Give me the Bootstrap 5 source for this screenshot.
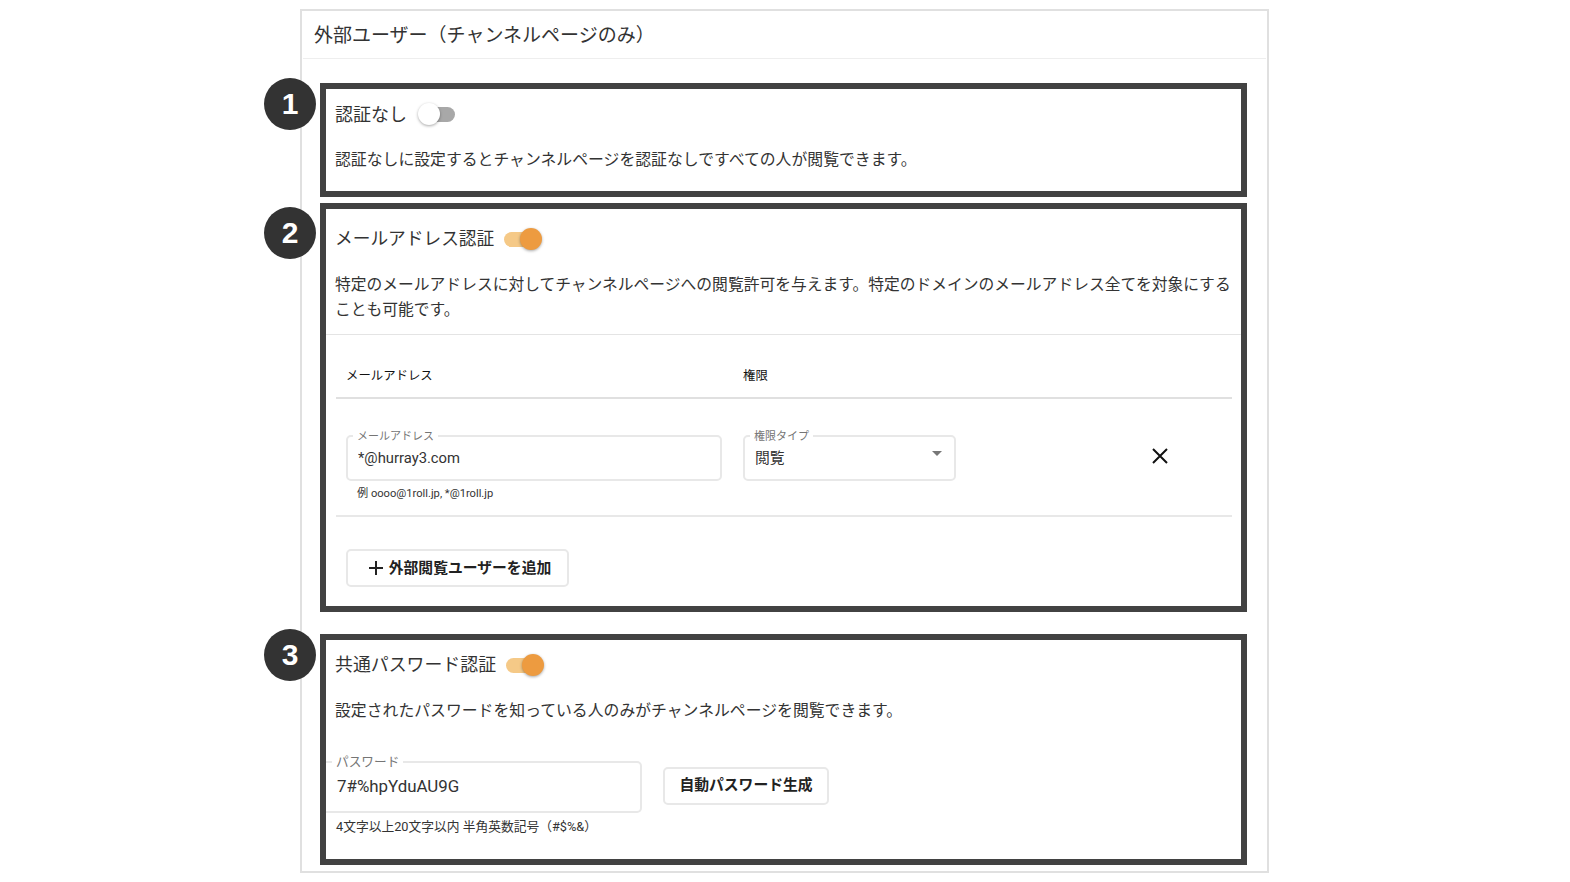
<!DOCTYPE html>
<html lang="ja">
<head>
    <meta charset="UTF-8">
    <meta name="viewport" content="width=device-width, initial-scale=1.0">
    <title>外部ユーザー</title>
    <link href="https://cdn.jsdelivr.net/npm/bootstrap@5.3.0/dist/css/bootstrap.min.css" rel="stylesheet">
    <style>
        body { background: #fff; color: #333; font-family: Roboto, "Noto Sans CJK JP", sans-serif; }
        .page-card { width: 969px; margin: 9px 0 0 300px; height: 864px; border: 2px solid #e0e0e0; border-radius: 0; }
        .page-head { height: 48px; margin: 0 1px; padding: 3px 0 0 11px; font-size: 19px; border-bottom: 1px solid #eee; }
        .auth-box { position: relative; margin: 0 20px 0 18px; border: 6px solid #424242; }
        .box-one { margin-top: 24px; height: 114px; }
        .box-two { margin-top: 6px; height: 409px; }
        .box-three { margin-top: 22px; height: 231px; }
        .step-no { position: absolute; left: -62px; width: 52px; height: 52px; border-radius: 50%; background: #333; color: #fff; font: 700 30px "Liberation Sans", sans-serif; }
        .box-one .step-no { top: -11px; }
        .box-two .step-no { top: -2px; }
        .box-three .step-no { top: -11px; }
        .box-title { padding-left: 9px; font-size: 18px; gap: 7px; }
        .box-one .box-title, .box-three .box-title { height: 50px; }
        .box-two .box-title { height: 61px; font-size: 17.7px; gap: 10px; }
        .box-three .box-title { font-size: 17.9px; gap: 10px; height: 51px; }
        .box-text { padding: 0 0 0 9px; margin: 0; font-size: 15.85px; line-height: 25.5px; }
        .box-one .box-text { margin-top: 8px; }
        .box-two .box-text { margin-top: 2px; font-size: 15.78px; line-height: 25px; }
        .box-three .box-text { margin-top: 7px; }
        .sw-track { position: relative; display: block; width: 30px; height: 15px; border-radius: 8px; }
        .sw-off { background: #a8a8a8; margin-left: 11px; }
        .sw-on { background: #f5c987; }
        .sw-track::after { content: ""; position: absolute; top: -4px; width: 22px; height: 22px; border-radius: 50%; box-shadow: 0 1px 3px rgba(0,0,0,.35); }
        .sw-off::after { left: -7px; background: #fff; }
        .sw-on::after { right: -8px; background: #ed9b40; }
        .sep-full { height: 1px; margin: 12px 0 0; background: #e4e4e4; }
        .user-table { margin: 0 9px 0 10px; }
        .user-head { height: 64px; padding-top: 20px; border-bottom: 2px solid #e0e0e0; font-size: 12.4px; font-weight: 400; color: #111; }
        .user-row { height: 118px; padding-top: 36px; border-bottom: 2px solid #e8e8e8; }
        .col-mail { width: 376px; margin-left: 10px; margin-right: 21px; }
        .col-role { width: 213px; }
        .field-wrap { position: relative; }
        .field-wrap label { position: absolute; left: 7px; top: -3px; padding: 0 4px; background: #fff; font-size: 11px; line-height: 10px; color: #757575; }
        .field-input.form-control, .field-input.form-select { height: 46px; padding: 0 10px; font-size: 14.8px; line-height: 22px; color: #333; border: 2px solid #e8e8e8; border-radius: 5px; }
        .field-input.form-select { background-image: url("data:image/svg+xml,%3csvg xmlns='http://www.w3.org/2000/svg' width='10' height='5'%3e%3cpath fill='%23777' d='M0 0h10L5 5z'/%3e%3c/svg%3e"); background-position: right 12px top 14px; background-size: 10px 5px; }
        .field-hint { margin: 5px 0 0 11px; font-size: 11.15px; line-height: 16px; color: #333; }
        .del-btn { margin-left: 196px; margin-top: 13px; padding: 0; border: 0; background: none; line-height: 0; }
        .add-btn.btn, .gen-btn.btn { font-size: 14.8px; font-weight: 700; color: #222; background: #fff; border: 2px solid #e8e8e8; border-radius: 5px; }
        .add-btn.btn { width: 223px; height: 38px; margin: 32px 0 0 10px; padding: 0 0 0 4px; gap: 5px; }
        .pw-row { margin-top: 37px; }
        .pw-wrap { width: 316px; }
        .pw-wrap label { left: 6px; top: -6px; font-size: 12.7px; line-height: 14px; }
        .pw-wrap .field-input.form-control { height: 52px; padding: 0 11px 2px; font-size: 16.9px; border-left: 0; border-radius: 0 5px 5px 0; }
        .gen-btn.btn { width: 166px; height: 38px; margin: 6px 0 0 21px; padding: 0; }
        .pw-hint { margin: 5px 0 0 10px; font-size: 12.75px; line-height: 18px; }
    </style>
</head>
<body>
<div class="page-card">
    <div class="page-head d-flex align-items-center">外部ユーザー（チャンネルページのみ）</div>

    <!-- 1 -->
    <div class="auth-box box-one">
        <div class="step-no d-flex align-items-center justify-content-center">1</div>
        <div class="box-title d-flex align-items-center">認証なし <span class="sw-track sw-off"></span></div>
        <p class="box-text">認証なしに設定するとチャンネルページを認証なしですべての人が閲覧できます。</p>
    </div>

    <!-- 2 -->
    <div class="auth-box box-two">
        <div class="step-no d-flex align-items-center justify-content-center">2</div>
        <div class="box-title d-flex align-items-center">メールアドレス認証 <span class="sw-track sw-on"></span></div>
        <p class="box-text">特定のメールアドレスに対してチャンネルページへの閲覧許可を与えます。特定のドメインのメールアドレス全てを対象にすることも可能です。</p>
        <div class="sep-full"></div>
        <div class="user-table">
            <div class="user-head d-flex align-items-center">
                <div class="col-mail">メールアドレス</div>
                <div class="col-role">権限</div>
            </div>
            <div class="user-row d-flex align-items-start">
                <div class="col-mail">
                    <div class="field-wrap">
                        <label for="mail">メールアドレス</label>
                        <input id="mail" type="text" class="form-control field-input" value="*@hurray3.com">
                    </div>
                    <p class="field-hint">例 oooo@1roll.jp, *@1roll.jp</p>
                </div>
                <div class="col-role field-wrap">
                    <label for="role">権限タイプ</label>
                    <select id="role" class="form-select field-input"><option>閲覧</option></select>
                </div>
                <button type="button" class="del-btn" aria-label="削除">
                    <svg width="16" height="16" viewBox="0 0 16 16"><path d="M1 1l14 14M15 1L1 15" stroke="#111" stroke-width="2" fill="none"/></svg>
                </button>
            </div>
            <button type="button" class="btn add-btn d-inline-flex align-items-center justify-content-center">
                <svg width="16" height="16" viewBox="0 0 16 16"><path d="M8 1v14M1 8h14" stroke="#222" stroke-width="2" fill="none"/></svg>
                外部閲覧ユーザーを追加
            </button>
        </div>
    </div>

    <!-- 3 -->
    <div class="auth-box box-three">
        <div class="step-no d-flex align-items-center justify-content-center">3</div>
        <div class="box-title d-flex align-items-center">共通パスワード認証 <span class="sw-track sw-on"></span></div>
        <p class="box-text">設定されたパスワードを知っている人のみがチャンネルページを閲覧できます。</p>
        <div class="pw-row d-flex align-items-start">
            <div class="pw-wrap field-wrap">
                <label for="pw">パスワード</label>
                <input id="pw" type="text" class="form-control field-input" value="7#%hpYduAU9G">
            </div>
            <button type="button" class="btn gen-btn">自動パスワード生成</button>
        </div>
        <p class="pw-hint">4文字以上20文字以内 半角英数記号（#$%&amp;）</p>
    </div>
</div>
<script src="https://cdn.jsdelivr.net/npm/bootstrap@5.3.0/dist/js/bootstrap.bundle.min.js"></script>
</body>
</html>
